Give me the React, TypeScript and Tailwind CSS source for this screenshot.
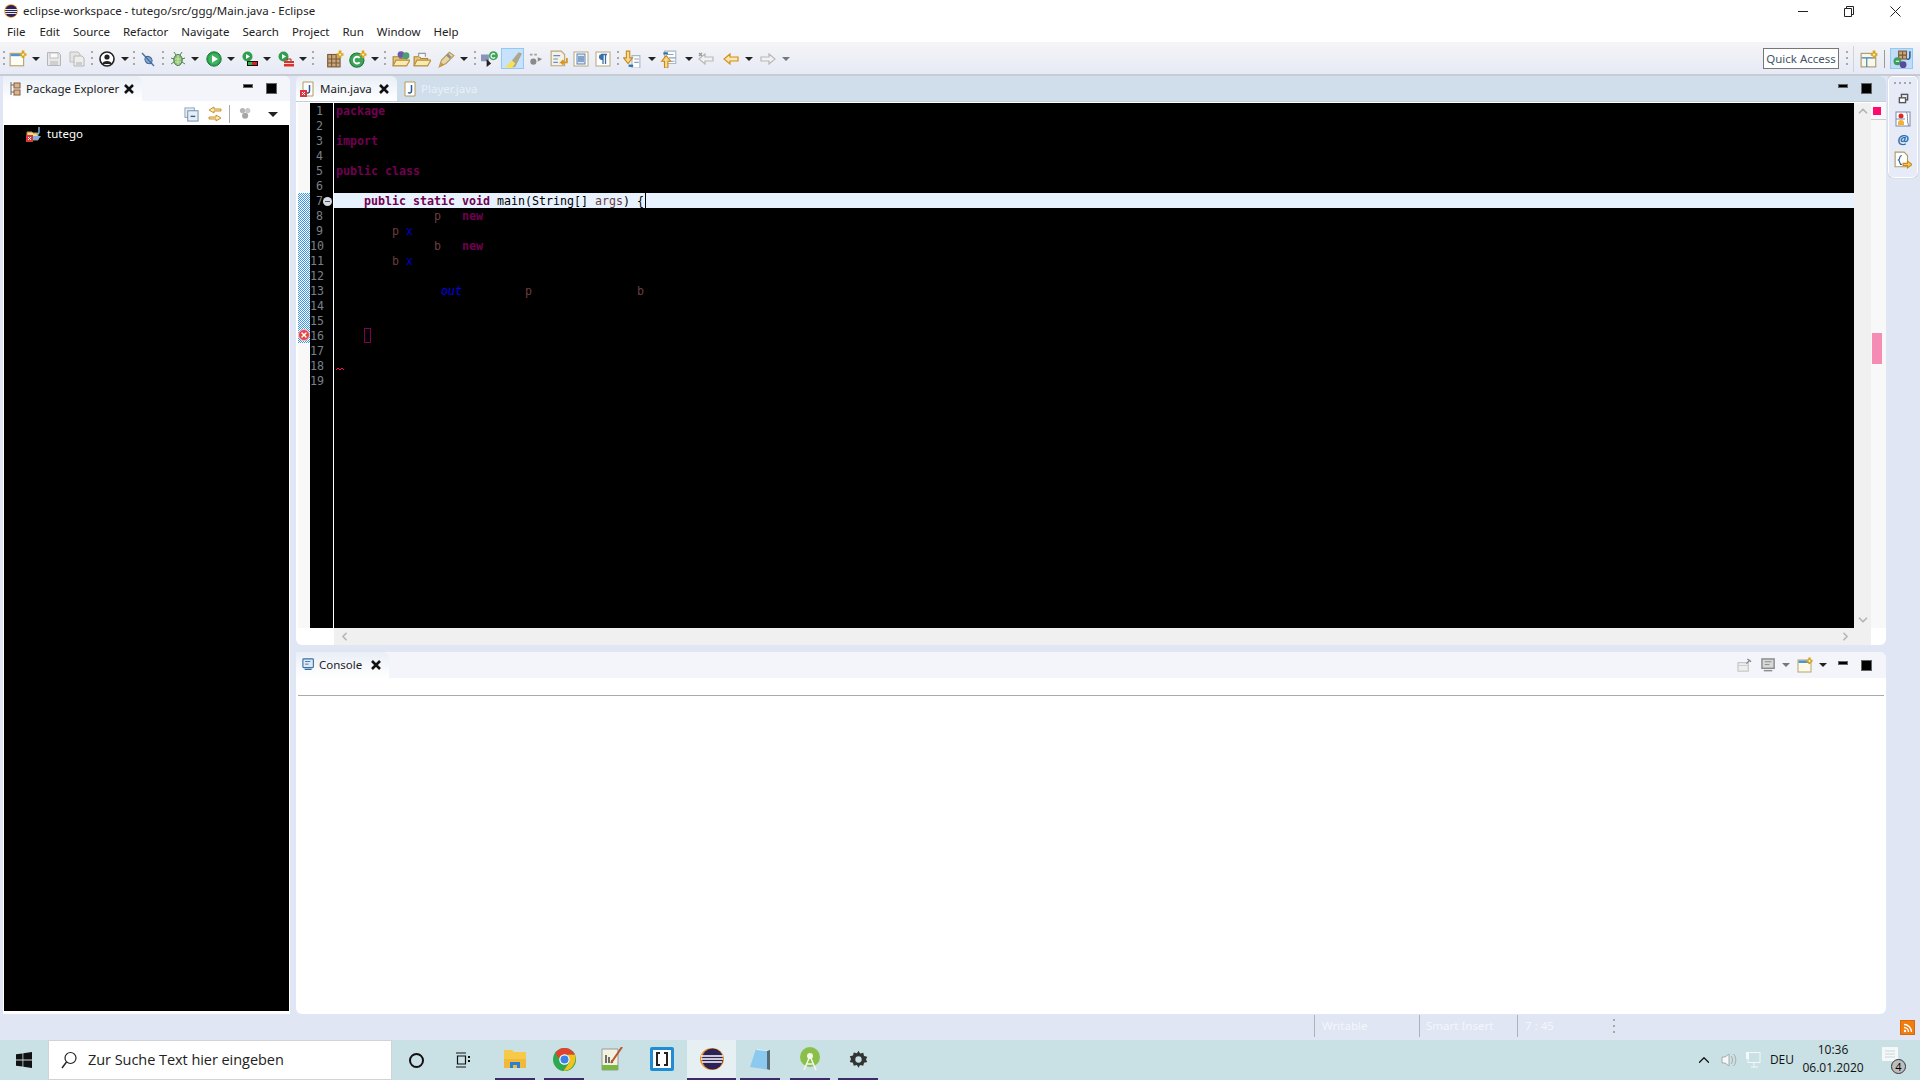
import React from "react";
import { ChevronUp, ChevronDown, ChevronLeft, ChevronRight, X } from "lucide-react";

type P = { className?: string };

const Svg = ({ children, size = 16, className = "" }: { children: React.ReactNode; size?: number; className?: string }) => (
  <svg width={size} height={size} viewBox="0 0 16 16" className={`shrink-0 ${className}`}>
    {children}
  </svg>
);

const Star = ({ x = 12, y = 4 }: { x?: number; y?: number }) => (
  <path d={`M${x} ${y - 3.5}v2.5h-0M${x - 3} ${y}h6M${x} ${y - 3}v6`} stroke="#d9a520" strokeWidth="2.4" fill="none" />
);

const NewIcon = () => (
  <Svg size={18}>
    <rect x="1" y="3" width="12" height="11" fill="#fdfdf5" stroke="#b9a36f" />
    <rect x="1.5" y="3.5" width="11" height="2" fill="#4f94cf" />
    <Star x={12.5} y={4} />
    <path d="M11.5 4h2M12.5 3v2" stroke="#fff6c8" />
  </Svg>
);
const SaveIcon = () => (
  <Svg>
    <path d="M1.5 1.5h11l2 2v11h-13z" fill="#e8e8e8" stroke="#b5b5b5" />
    <rect x="4" y="2" width="8" height="5" fill="#fafafa" stroke="#c0c0c0" />
    <rect x="4" y="10" width="8" height="4" fill="#cfcfcf" />
  </Svg>
);
const SaveAllIcon = () => (
  <Svg>
    <path d="M1 1h8l2 2v8H1z" fill="#e5e5e5" stroke="#bdbdbd" />
    <path d="M5 5h8l2 2v8H5z" fill="#eee" stroke="#b5b5b5" />
    <rect x="7" y="11" width="6" height="3" fill="#cdcdcd" />
  </Svg>
);
const PersonIcon = () => (
  <Svg>
    <circle cx="8" cy="8" r="7" fill="#fff" stroke="#222" strokeWidth="1.6" />
    <circle cx="8" cy="6" r="2.6" fill="#222" />
    <path d="M3 13c1-4 9-4 10 0z" fill="#222" />
  </Svg>
);
const SkipIcon = () => (
  <Svg>
    <ellipse cx="8.5" cy="9" rx="3.2" ry="4" transform="rotate(-40 8.5 9)" fill="#8fa6c9" stroke="#37608f" />
    <path d="M2 2l12 13" stroke="#3f6fa8" strokeWidth="1.3" />
  </Svg>
);
const BugIcon = () => (
  <Svg>
    <path d="M4 1l2 3M12 1l-2 3M1 7l3 1M15 7l-3 1M1 13l3-2M15 13l-3-2" stroke="#5a7a5a" />
    <ellipse cx="8" cy="9" rx="4.2" ry="5.5" fill="#8fc16f" stroke="#3f7a53" />
    <path d="M8 4v10M5 8h6M5 11h6" stroke="#c9e6b3" />
  </Svg>
);
const GreenDisc = ({ size = 16 }: { size?: number }) => (
  <Svg size={size}>
    <circle cx="8" cy="8" r="7.2" fill="#2f9e4f" stroke="#1c7a3a" />
    <circle cx="8" cy="8" r="5.5" fill="#3cb35c" />
    <path d="M6 4.2l6 3.8-6 3.8z" fill="#fff" />
  </Svg>
);
const CoverageIcon = () => (
  <Svg>
    <circle cx="5.5" cy="5.5" r="5" fill="#2f9e4f" />
    <path d="M4 3l4 2.5L4 8z" fill="#fff" />
    <rect x="5" y="10" width="11" height="5" fill="#111" />
    <rect x="6" y="11" width="4" height="3" fill="#2fb53f" />
    <rect x="10" y="11" width="5" height="3" fill="#d82020" />
  </Svg>
);
const ExternalIcon = () => (
  <Svg>
    <circle cx="5.5" cy="5.5" r="5" fill="#2f9e4f" />
    <path d="M4 3l4 2.5L4 8z" fill="#fff" />
    <rect x="6" y="10" width="10" height="5.5" fill="#d9342b" />
    <path d="M9 10V8h4v2" stroke="#a82018" fill="none" />
    <path d="M6 12.5h10" stroke="#fff" strokeWidth=".8" />
  </Svg>
);
const PackageIcon = () => (
  <Svg size={18}>
    <rect x="1.5" y="4" width="11" height="11" fill="#c8a77a" stroke="#7b5a3a" />
    <path d="M5 4v11M9 4v11M1.5 8h11M1.5 11.5h11" stroke="#7b5a3a" />
    <Star x={12.5} y={4} />
    <path d="M11.5 4h2M12.5 3v2" stroke="#fff6c8" />
  </Svg>
);
const ClassIcon = () => (
  <Svg size={18}>
    <circle cx="7" cy="9" r="6.3" fill="#3fa35a" stroke="#1f7a3c" />
    <path d="M9.5 7a3 3 0 1 0 0 4" stroke="#fff" strokeWidth="1.6" fill="none" />
    <Star x={12.5} y={4} />
    <path d="M11.5 4h2M12.5 3v2" stroke="#fff6c8" />
  </Svg>
);
const FolderIcon = ({ extra = false }: { extra?: boolean }) => (
  <Svg size={18}>
    <path d="M1 6h5l1 1.5h6V14H1z" fill="#e8c777" stroke="#a8853c" />
    <path d="M1 14l2.5-5H16l-3 5z" fill="#fbeab0" stroke="#b3913f" />
    {extra && <circle cx="8" cy="4" r="3" fill="#6a5aa8" />}
    {extra && <circle cx="12.5" cy="5" r="3" fill="#4f9e6f" />}
    {!extra && <path d="M5 6V3h6v3" fill="#f7f7f7" stroke="#999" />}
  </Svg>
);
const PenIcon = () => (
  <Svg size={18}>
    <path d="M2 15l2-6 7-7 4 3-7 7z" fill="#e9d6a0" stroke="#b09a66" />
    <path d="M9 4l3 3" stroke="#8e8e8e" strokeWidth="2.5" />
    <path d="M2 15l2-4 2 2z" fill="#c9972f" />
  </Svg>
);
const HierIcon = () => (
  <Svg size={18}>
    <rect x="0" y="4" width="7" height="6" fill="#8a93b8" />
    <path d="M5 8v7l4-3z" fill="#222" />
    <circle cx="11" cy="5" r="4" fill="#3fa35a" />
    <path d="M12.5 4a2 2 0 1 0 0 2.500" stroke="#fff" fill="none" />
  </Svg>
);
const MarkIcon = () => (
  <Svg size={18}>
    <path d="M2 16l2-3 9-11 3 1-6 12z" fill="#ada78f" />
    <path d="M1 16h6l3-4-3-3z" fill="#f5e25a" />
  </Svg>
);
const ToggleIcon = () => (
  <Svg size={14}>
    <circle cx="5" cy="11" r="3.5" fill="#8a8a8a" />
    <path d="M1 3h3M6 3h3" stroke="#a0a0a0" strokeWidth="2" />
    <path d="M10 6l5 2-5 3z" fill="#8a8a8a" />
  </Svg>
);
const WrapIcon = () => (
  <Svg size={18}>
    <path d="M1 1h9l3 3v10H1z" fill="#f4f2e6" stroke="#b8a67a" />
    <path d="M3 5h6M3 8h4M3 11h4" stroke="#6a8cc0" />
    <path d="M15 7v4h-5l2-2m-2 2l2 2" stroke="#d6951f" strokeWidth="1.6" fill="none" />
  </Svg>
);
const BlockIcon = () => (
  <Svg size={16}>
    <rect x="1" y="1" width="14" height="14" fill="#fff" stroke="#b8a67a" />
    <rect x="4" y="3" width="8" height="10" fill="#dfe8f5" stroke="#5b82b6" />
    <path d="M5 6h6M5 8h6M5 10h6" stroke="#2f5f9e" />
  </Svg>
);
const ParaIcon = () => (
  <Svg size={16}>
    <rect x="1" y="1" width="14" height="14" fill="#fff" stroke="#b8a67a" />
    <path d="M6 3.500h6M8 3.500V13M10.500 3.500V13M8 8.500C3.500 8.500 3.500 3.500 8 3.500" stroke="#3a70a8" strokeWidth="1.300" fill="#3a70a8" />
  </Svg>
);
const DownArrowIcon = () => (
  <Svg size={18}>
    <path d="M8 5h7v11H8zM15 5v11" fill="#fff" stroke="#a8b8c8" />
    <path d="M10 8h4M10 11h4" stroke="#8aa0c0" />
    <rect x="5" y="13" width="4" height="2" fill="#2f6fb0" />
    <path d="M3 1h3v6h2.500L4.500 12 .5 7H3z" fill="#f7d98f" stroke="#c8891c" />
  </Svg>
);
const UpArrowIcon = () => (
  <Svg size={18}>
    <path d="M4 1h10v11H4z" fill="#fff" stroke="#a8b8c8" />
    <path d="M6 4h6M8 7h6M8 10h5" stroke="#8aa0c0" />
    <rect x="3" y="2" width="4" height="2" fill="#2f6fb0" />
    <path d="M4 16h3v-6h2.500L5.500 5 1.500 10H4z" fill="#f7d98f" stroke="#c8891c" />
  </Svg>
);
const BackIcon = ({ gray = false, edit = false }: { gray?: boolean; edit?: boolean }) => (
  <Svg>
    <path d="M1 8l6-5v3h8v4H7v3z" fill={gray ? "#f2f2f2" : "#fbe6ac"} stroke={gray ? "#b8b8b8" : "#d09020"} strokeWidth="1.200" />
    {edit && <path d="M1 2l3 3M4 2L1 5" stroke="#999" strokeWidth="1.300" />}
  </Svg>
);
const ForwardIcon = () => (
  <Svg>
    <path d="M15 8l-6-5v3H1v4h8v3z" fill="#f2f2f2" stroke="#b8b8b8" strokeWidth="1.200" />
  </Svg>
);

const Drop = ({ className = "", gray = false }: P & { gray?: boolean }) => (
  <span className={`block w-0 h-0 border-x-[4px] border-x-transparent border-t-[4px] shrink-0 ${gray ? "border-t-[#777]" : "border-t-[#222]"} ${className}`} />
);
const Grip = ({ className = "" }: P) => (
  <span className={`block w-[2px] h-[16px] shrink-0 bg-[repeating-linear-gradient(to_bottom,#a8a8a8_0_2px,transparent_2px_6px)] ${className}`} />
);

const XMark = () => (
  <svg width="12" height="12" viewBox="0 0 12 12" className="shrink-0">
    <path d="M2 2l8 8M10 2l-8 8" stroke="#111" strokeWidth="2.600" />
  </svg>
);
const MinBtn = ({ className = "" }: P) => <span className={`block w-[10px] h-[4px] bg-black border border-[#666] shrink-0 ${className}`} />;
const MaxBtn = ({ className = "" }: P) => <span className={`block w-[11px] h-[11px] bg-black border border-[#666] shrink-0 ${className}`} />;

const EclipseLogo = ({ size = 14 }: { size?: number }) => (
  <svg width={size} height={size} viewBox="0 0 14 14" className="shrink-0">
    <circle cx="7" cy="7" r="6.800" fill="#e8902a" />
    <circle cx="7.200" cy="7" r="6" fill="#2c2255" />
    <path d="M1 5.500h12M.8 7.500h12.400M1.500 9.500h11" stroke="#fff" strokeWidth=".9" />
  </svg>
);

const JavaFile = ({ error = false }: { error?: boolean }) => (
  <Svg size={16}>
    <path d="M3 1h10v14H3z" fill="#fff" stroke="#b59a5c" />
    <path d="M9.500 4v6c0 2-2 2.500-3.500 1.500" stroke="#2a5a9e" strokeWidth="1.500" fill="none" />
    {error && <rect x="0" y="9" width="7" height="7" fill="#d8363c" />}
    {error && <path d="M2 11l3 3M5 11l-3 3" stroke="#fff" />}
  </Svg>
);

const codeCls = "h-[15px] leading-[17px] whitespace-pre pl-[2px]";
const kw = "text-[#720050] font-bold";

const CodeLines = () => (
  <>
    <div className={codeCls}><span className={kw}>package</span></div>
    <div className={codeCls} />
    <div className={codeCls}><span className={kw}>import</span></div>
    <div className={codeCls} />
    <div className={codeCls}><span className={kw}>public class</span></div>
    <div className={codeCls} />
    <div className={`${codeCls} bg-[#e8f2fe] text-black`}>
      {"    "}<span className={kw}>public static void</span> main(String[] <span className="text-[#6a3e3e]">args</span>) {"{"}
      <span className="inline-block w-[1px] h-[15px] bg-black align-top ml-[1px]" />
    </div>
    <div className={codeCls}>{"              "}<span className="text-[#6a3e3e]">p</span>{"   "}<span className={kw}>new</span></div>
    <div className={codeCls}>{"        "}<span className="text-[#6a3e3e]">p</span>{" "}<span className="text-[#0000d0]">x</span></div>
    <div className={codeCls}>{"              "}<span className="text-[#6a3e3e]">b</span>{"   "}<span className={kw}>new</span></div>
    <div className={codeCls}>{"        "}<span className="text-[#6a3e3e]">b</span>{" "}<span className="text-[#0000d0]">x</span></div>
    <div className={codeCls} />
    <div className={codeCls}>
      {"               "}<span className="text-[#0000e6] italic">out</span>{"         "}<span className="text-[#6a3e3e]">p</span>{"               "}<span className="text-[#6a3e3e]">b</span>
    </div>
    <div className={codeCls} />
    <div className={codeCls} />
    <div className={codeCls}>{"    "}<span className="inline-block w-[7px] h-[15px] border border-[#7f0055] align-top" /></div>
    <div className={codeCls} />
    <div className={codeCls}>
      <svg width="8" height="15" viewBox="0 0 8 15" className="inline-block align-top">
        <path d="M0 12l2-2 2 2 2-2 2 2" stroke="#ff0a6c" fill="none" />
      </svg>
    </div>
    <div className={codeCls} />
  </>
);

const numbers = Array.from({ length: 19 }, (_, i) => i + 1);

const Toolbar = () => (
  <div className="h-[34px] flex items-center shrink-0 pt-[1px] bg-gradient-to-b from-[#f5f5f6] to-[#e6eaf6] border-b-2 border-[#c8cbd2]">
    <Grip className="ml-[3px]" />
    <span className="ml-[4px]"><NewIcon /></span>
    <Drop className="ml-[5px]" />
    <span className="ml-[6px]"><SaveIcon /></span>
    <span className="ml-[7px]"><SaveAllIcon /></span>
    <Grip className="ml-[6px]" />
    <span className="ml-[6px]"><PersonIcon /></span>
    <Drop className="ml-[6px]" />
    <Grip className="ml-[4px]" />
    <span className="ml-[5px]"><SkipIcon /></span>
    <Grip className="ml-[6px]" />
    <span className="ml-[6px]"><BugIcon /></span>
    <Drop className="ml-[5px]" />
    <span className="ml-[7px]"><GreenDisc /></span>
    <Drop className="ml-[5px]" />
    <span className="ml-[7px]"><CoverageIcon /></span>
    <Drop className="ml-[5px]" />
    <span className="ml-[7px]"><ExternalIcon /></span>
    <Drop className="ml-[5px]" />
    <Grip className="ml-[5px]" />
    <span className="ml-[12px]"><PackageIcon /></span>
    <span className="ml-[5px]"><ClassIcon /></span>
    <Drop className="ml-[4px]" />
    <Grip className="ml-[5px]" />
    <span className="ml-[6px]"><FolderIcon extra /></span>
    <span className="ml-[3px]"><FolderIcon /></span>
    <span className="ml-[6px]"><PenIcon /></span>
    <Drop className="ml-[5px]" />
    <Grip className="ml-[6px]" />
    <span className="ml-[5px]"><HierIcon /></span>
    <span className="ml-[2px] w-[23px] h-[21px] flex items-center justify-center bg-[#c9e2fb] border border-[#90c8f6]"><MarkIcon /></span>
    <span className="ml-[5px]"><ToggleIcon /></span>
    <span className="ml-[7px]"><WrapIcon /></span>
    <span className="ml-[5px]"><BlockIcon /></span>
    <span className="ml-[6px]"><ParaIcon /></span>
    <Grip className="ml-[6px]" />
    <span className="ml-[4px]"><DownArrowIcon /></span>
    <Drop className="ml-[7px]" />
    <span className="ml-[4px]"><UpArrowIcon /></span>
    <Drop className="ml-[7px]" />
    <span className="ml-[5px]"><BackIcon gray edit /></span>
    <span className="ml-[9px]"><BackIcon /></span>
    <Drop className="ml-[6px]" />
    <span className="ml-[7px]"><ForwardIcon /></span>
    <Drop gray className="ml-[6px]" />
    <div className="ml-auto flex items-center">
      <div className="w-[76px] h-[21px] border border-[#777] bg-white text-[11.5px] leading-[19px] text-center text-[#445566]">Quick Access</div>
      <Grip className="ml-[7px]" />
      <span className="ml-[5px] w-[1px] h-[26px] bg-[#d0d3da]" />
      <span className="ml-[6px]">
        <Svg size={18}>
          <rect x="1" y="3" width="13" height="12" fill="#f9f7ea" stroke="#a99a70" />
          <path d="M1.500 7h12M6 7v8" stroke="#3f7fb0" />
          <Star x={12.500} y={4} />
          <path d="M11.500 4h2M12.500 3v2" stroke="#fff6c8" />
        </Svg>
      </span>
      <span className="ml-[6px] w-[1px] h-[18px] bg-[#999]" />
      <span className="ml-[5px] mr-[7px] w-[23px] h-[21px] flex items-center justify-center bg-[#c0dcf6] border border-[#90c8f6]">
        <Svg size={18}>
          <rect x="5" y="1" width="7" height="7" fill="#c8a77a" stroke="#7b5a3a" />
          <path d="M8.500 1v7M5 4.500h7" stroke="#7b5a3a" />
          <path d="M15 1v5c0 2-1 2.500-2.500 2" stroke="#2a5a9e" strokeWidth="1.400" fill="none" />
          <circle cx="4" cy="10" r="3.500" fill="#3b9e5a" />
          <path d="M2.500 10h3" stroke="#fff" />
          <circle cx="9" cy="13" r="3" fill="#5a4a9e" />
        </Svg>
      </span>
    </div>
  </div>
);

const PackageExplorer = () => (
  <section className="w-[287px] flex flex-col bg-white rounded-t-md">
    <div className="h-[25px] flex items-center bg-[#f3f5fb] rounded-t-md shrink-0">
      <div className="w-[139px] h-full flex items-center bg-gradient-to-b from-[#e9eff7] to-white rounded-tr-md pl-[6px] whitespace-nowrap">
        <svg width="12" height="14" viewBox="0 0 12 14" className="shrink-0">
          <path d="M2 0v13M2 3h3M2 10h3" stroke="#6a6a6a" />
          <rect x="5" y="1" width="6" height="5" fill="#d8b58a" stroke="#8a5a3a" />
          <rect x="5" y="8" width="6" height="5" fill="#d8b58a" stroke="#8a5a3a" />
        </svg>
        <span className="ml-[5px] text-[11.5px] leading-[27px] text-[#222]">Package Explorer</span>
        <span className="ml-[4px]"><XMark /></span>
      </div>
      <MinBtn className="ml-[101px] -mt-[6px]" />
      <MaxBtn className="ml-[13px] -mt-[1px]" />
    </div>
    <div className="h-[24px] flex items-center shrink-0 pl-[181px] pt-[2px]">
      <Svg size={15}>
        <rect x="1" y="1" width="10" height="10" fill="#e8eef6" stroke="#8aa0b8" />
        <rect x="4" y="4" width="11" height="11" fill="#e8eef6" stroke="#6a8aa8" />
        <path d="M7 10h5" stroke="#2f5f9e" strokeWidth="1.500" />
      </Svg>
      <Svg size={16} className="ml-[8px]">
        <path d="M7 1L2 4l5 3V5h7V3H7zM9 9l5 3-5 3v-2H2v-2h7z" fill="#f9e9b8" stroke="#c8922a" />
      </Svg>
      <span className="ml-[6px] w-[1px] h-[18px] bg-[#aaa]" />
      <Svg size={14} className="ml-[9px]">
        <circle cx="4" cy="4" r="3" fill="#b5b5b5" />
        <circle cx="10" cy="4" r="3" fill="#c8c8c8" />
        <circle cx="7" cy="10" r="3.500" fill="#a5a5a5" />
      </Svg>
      <Drop className="ml-[15px] border-x-[5px] border-t-[5px]" />
    </div>
    <div className="mx-[1px] h-[886px] bg-black text-white text-[11.5px] pl-[22px] pt-[1px] flex items-start">
      <div className="flex items-center h-[15px]">
        <Svg size={16}>
          <path d="M1 6h5l1 1h5v7H1z" fill="#f5d58a" stroke="#b3913f" />
          <path d="M2 14l2-4h11l-3 4z" fill="#7fb0e0" />
          <path d="M13 1v5c0 2-1.500 2-3 1.500" stroke="#7fb0e0" strokeWidth="1.500" fill="none" />
          <rect x="0" y="9" width="7" height="7" fill="#d8363c" />
          <path d="M2 11l3 3M5 11l-3 3" stroke="#fff" />
        </Svg>
        <span className="ml-[5px]">tutego</span>
      </div>
    </div>
  </section>
);

const EditorArea = () => (
  <section className="h-[569px] flex flex-col bg-white rounded-md shrink-0">
    <div className="h-[25px] flex items-stretch shrink-0 bg-[#d0deec] rounded-t-md">
      <div className="w-[101px] flex items-center bg-gradient-to-b from-[#e9eff7] to-white rounded-t-md pl-[4px]">
        <JavaFile error />
        <span className="ml-[4px] text-[11.5px] leading-[27px] text-[#222]">Main.java</span>
        <span className="ml-[6px]"><XMark /></span>
      </div>
      <div className="flex items-center pl-[5px]">
        <JavaFile />
        <span className="ml-[3px] text-[11.5px] leading-[27px] text-[#e9f0f7]">Player.java</span>
      </div>
      <div className="ml-auto flex items-center pr-[14px]">
        <MinBtn className="-mt-[6px]" />
        <MaxBtn className="ml-[13px] -mt-[1px]" />
      </div>
    </div>
    <div className="h-[2px] shrink-0 bg-white border-t border-[#c5cdd8]" />
    <div className="h-[525px] flex shrink-0 font-['DejaVu_Sans_Mono',monospace] text-[11.63px]">
      <div className="w-[14px] pl-[2px] shrink-0">
        <div className="h-full bg-[#f8f8f8] relative">
          <div className="mt-[0px] pt-[90px] h-[240px]">
            <div className="h-[150px] bg-[repeating-conic-gradient(#3e96ec_0_25%,#ffffff_0_50%)] bg-[length:2px_2px]" />
          </div>
          <span className="absolute left-[0px] top-[226px] w-[12px] h-[12px] rounded-full bg-[#e04848] border border-[#f4c0c0] flex items-center justify-center">
            <X size={8} strokeWidth={4} color="#fff" />
          </span>
        </div>
      </div>
      <div className="w-[23px] bg-black text-[#788089] text-right pr-[10px] shrink-0 relative">
        {numbers.map((n) => (
          <div key={n} className="h-[15px] leading-[17px]">{n}</div>
        ))}
        <span className="absolute left-[13px] top-[94px] w-[9px] h-[9px] rounded-full bg-[#d5dde2] flex items-center justify-center">
          <span className="w-[5px] h-[1px] bg-[#556]" />
        </span>
      </div>
      <div className="w-[1px] bg-white shrink-0" />
      <div className="flex-1 bg-black text-black overflow-hidden">
        <CodeLines />
      </div>
      <div className="w-[17px] bg-[#f0f0f0] shrink-0 flex flex-col items-center justify-between text-[#b5b5b5] py-[1px]">
        <ChevronUp size={14} strokeWidth={3} />
        <ChevronDown size={14} strokeWidth={3} />
      </div>
      <div className="w-[15px] bg-[#f8f8f8] shrink-0 relative">
        <span className="absolute left-[2px] top-[4px] w-[8px] h-[8px] bg-[#ff0a6c]" />
        <span className="absolute left-0 top-[16px] w-full h-[1px] bg-[#ccc]" />
        <span className="absolute left-[1px] top-[230px] w-[10px] h-[31px] bg-[#f48cb4]" />
      </div>
    </div>
    <div className="h-[17px] flex shrink-0">
      <div className="w-[38px] shrink-0" />
      <div className="flex-1 bg-[#f0f0f0] flex items-center justify-between px-[4px] text-[#b5b5b5]">
        <ChevronLeft size={13} strokeWidth={3} />
        <ChevronRight size={13} strokeWidth={3} className="mr-[15px]" />
      </div>
      <div className="w-[15px] shrink-0" />
    </div>
  </section>
);

const ConsoleArea = () => (
  <section className="flex-1 flex flex-col bg-white rounded-t-md rounded-b-md">
    <div className="h-[26px] flex items-center bg-[#f3f5fb] rounded-t-md shrink-0">
      <div className="w-[93px] h-full flex items-center bg-gradient-to-b from-[#e9eff7] to-white rounded-tr-md pl-[6px]">
        <Svg size={14}>
          <rect x="1" y="1" width="12" height="10" rx="1" fill="#dfe8f5" stroke="#3a70a8" strokeWidth="1.300" />
          <path d="M3.500 4h6M3.500 7h4" stroke="#3a70a8" />
          <path d="M3 13h8" stroke="#3a70a8" strokeWidth="1.500" />
        </Svg>
        <span className="ml-[3px] text-[11.5px] leading-[28px] text-[#222]">Console</span>
        <span className="ml-[8px]"><XMark /></span>
      </div>
      <div className="ml-auto flex items-center pr-[14px]">
        <Svg size={15}>
          <rect x="1" y="5" width="11" height="9" fill="#eee" stroke="#bbb" />
          <path d="M1 8h11" stroke="#ccc" />
          <path d="M10 6l4-4M11 1l4 3" stroke="#888" strokeWidth="1.500" />
        </Svg>
        <Svg size={15} className="ml-[9px]">
          <rect x="1" y="1" width="13" height="10" fill="#d8d8d8" stroke="#8a8a8a" strokeWidth="1.500" />
          <path d="M4 4h7M4 7h5" stroke="#8a8a8a" />
          <path d="M3 13.500h9" stroke="#8a8a8a" strokeWidth="1.500" />
        </Svg>
        <Drop gray className="ml-[6px]" />
        <Svg size={16} className="ml-[7px]">
          <rect x="1" y="3" width="13" height="12" fill="#fdfbe8" stroke="#b9a36f" />
          <rect x="1.500" y="3.500" width="12" height="2.500" fill="#4f94cf" />
          <Star x={12.500} y={4} />
          <path d="M11.500 4h2M12.500 3v2" stroke="#fff6c8" />
        </Svg>
        <Drop className="ml-[6px]" />
        <MinBtn className="ml-[11px] -mt-[5px]" />
        <MaxBtn className="ml-[13px]" />
      </div>
    </div>
    <div className="mx-[2px] mt-[17px] h-[1px] bg-[#aaaaaa]" />
  </section>
);

const TrimStack = () => (
  <aside className="w-[30px] h-[102px] flex flex-col items-center bg-[#e6ebf7] border border-white rounded-b-md rounded-t-sm shadow-[0_0_1px_#999]">
    <span className="mt-[5px] w-[18px] h-[2px] bg-[repeating-linear-gradient(to_right,#a8a8a8_0_2px,transparent_2px_5px)]" />
    <Svg size={11} className="mt-[9px]">
      <rect x="5" y="2" width="9" height="8" fill="none" stroke="#555" strokeWidth="2" />
      <rect x="2" y="7" width="9" height="7" fill="#fff" stroke="#555" strokeWidth="2" />
    </Svg>
    <Svg size={16} className="mt-[7px]">
      <rect x="1" y="1" width="14" height="14" fill="#fff" stroke="#7b8aa8" />
      <circle cx="6" cy="5" r="2.500" fill="#e02828" />
      <path d="M3 12a3 3 0 0 1 6 0v2H3z" fill="#f4b030" />
      <path d="M1 8h9M11 1c3 3 0 9 3 14" stroke="#7b8aa8" fill="none" />
    </Svg>
    <span className="mt-[5px] text-[13px] leading-[15px] italic font-bold text-[#2a70b0]">@</span>
    <Svg size={18} className="mt-[4px]">
      <path d="M1 1h8l3 3v10H1z" fill="#fff" stroke="#b09a60" />
      <path d="M7 4C4 4 6 7 4 8c2 1 0 4 3 4" stroke="#2a5a9e" fill="none" />
      <path d="M8 11h4V9l4 3-4 3v-2H8z" fill="#f5c860" stroke="#c8891c" />
    </Svg>
  </aside>
);

const StatusBar = () => (
  <div className="h-[26px] shrink-0 flex items-start text-[11.5px] text-[#f4f6fb] pt-[1px]">
    <div className="ml-[1314px] w-[105px] h-[22px] border-l border-[#aeb2ba] pl-[7px] leading-[22px]">Writable</div>
    <div className="w-[98px] h-[22px] border-l border-[#aeb2ba] pl-[6px] leading-[22px]">Smart Insert</div>
    <div className="w-[96px] h-[22px] border-l border-[#aeb2ba] pl-[7px] leading-[22px]">7 : 45</div>
    <Grip className="mt-[4px]" />
    <span className="ml-[285px] mt-[5px] w-[15px] h-[15px] bg-[#f07d12] border border-[#d8690a] flex items-center justify-center">
      <svg width="10" height="10" viewBox="0 0 10 10">
        <circle cx="2" cy="8" r="1.200" fill="#fff" />
        <path d="M1 4.500A4.500 4.500 0 0 1 5.500 9M1 1.500A7.500 7.500 0 0 1 8.500 9" stroke="#fff" strokeWidth="1.300" fill="none" />
      </svg>
    </span>
  </div>
);

const TaskIcon = ({ children, wide = false, active = false, running = true, className = "" }: { children: React.ReactNode; wide?: boolean; active?: boolean; running?: boolean; className?: string }) => (
  <div className={`h-full flex items-center justify-center shrink-0 border-b-2 ${running ? "border-[#3d2a6d]" : "border-transparent"} ${wide ? "w-[49px]" : "w-[40px]"} ${active ? "bg-[#e6f0f2]" : ""} ${className}`}>
    {children}
  </div>
);

const Taskbar = () => (
  <div className="h-[40px] shrink-0 bg-[#c9e0e4] flex items-center font-['Open_Sans',sans-serif]">
    <svg width="16" height="16" viewBox="0 0 16 16" className="ml-[16px] shrink-0">
      <path d="M0 2.300l6.500-.9v6.200H0zM7.300 1.300L16 0v7.600H7.300zM0 8.400h6.500v6.200L0 13.700zM7.300 8.400H16V16l-8.700-1.300z" fill="#111" />
    </svg>
    <div className="ml-[16px] w-[344px] h-full bg-white border border-[#d0d4d6] flex items-center pl-[11px] text-[14.5px] text-[#222]">
      <svg width="18" height="18" viewBox="0 0 18 18" className="shrink-0">
        <circle cx="10.500" cy="7" r="5.500" fill="none" stroke="#222" strokeWidth="1.200" />
        <path d="M6.500 11L2 17" stroke="#222" strokeWidth="1.400" />
      </svg>
      <span className="ml-[10px] tracking-[-0.05px]">Zur Suche Text hier eingeben</span>
    </div>
    <span className="ml-[17px] w-[15px] h-[15px] rounded-full border-[2.500px] border-[#111] shrink-0" />
    <svg width="16" height="16" viewBox="0 0 16 16" className="ml-[31px] shrink-0">
      <path d="M1 1h10M1 15h10M2.500 4h8v8h-8z" stroke="#111" fill="none" strokeWidth="1.200" />
      <path d="M13 4h2v2h-2zM13 8h2v2h-2z" fill="#111" />
    </svg>
    <div className="ml-[24px] h-full flex items-center">
      <TaskIcon>
        <svg width="22" height="18" viewBox="0 0 22 18">
          <path d="M0 0h8l2 2h12v16H0z" fill="#f7c948" />
          <rect x="0" y="9" width="22" height="9" fill="#f0b93a" />
          <path d="M6 18v-6h10v6h-3v-3H9v3z" fill="#2a7fd0" />
        </svg>
      </TaskIcon>
      <TaskIcon className="ml-[9px]">
        <svg width="23" height="23" viewBox="0 0 24 24">
          <circle cx="12" cy="12" r="12" fill="#2fa84f" />
          <path d="M12 0c5 0 9 3 11 7H12c-3 0-5 2-6 4L2.500 5C5 2 8 0 12 0z" fill="#e2412f" />
          <path d="M23 7c2 7-3 17-12 17l6-9c1-3 0-6-2-8z" fill="#f6c21a" />
          <circle cx="12" cy="12" r="5.500" fill="#fff" />
          <circle cx="12" cy="12" r="4.200" fill="#3c80e8" />
        </svg>
      </TaskIcon>
      <TaskIcon running={false} className="ml-[8px]">
        <svg width="22" height="24" viewBox="0 0 22 24">
          <path d="M1 2h16v21H1z" fill="#f2f2de" stroke="#999" />
          <path d="M1 18h16v5H1z" fill="#7ab648" />
          <path d="M5 8v8M8 10v6M11 13v3" stroke="#444" strokeWidth="1.500" />
          <path d="M21 0L10 16" stroke="#b7562e" strokeWidth="2" />
        </svg>
      </TaskIcon>
      <TaskIcon running={false} className="ml-[10px]">
        <svg width="24" height="24" viewBox="0 0 24 24">
          <rect x="0" y="0" width="24" height="24" rx="2" fill="#1f8dd6" />
          <rect x="3" y="3" width="18" height="18" fill="#fff" />
          <path d="M10 6H7v12h3M14 6h3v12h-3" stroke="#222" strokeWidth="2" fill="none" />
        </svg>
      </TaskIcon>
      <TaskIcon wide active className="ml-[5px]">
        <svg width="24" height="22" viewBox="0 0 24 22">
          <ellipse cx="12" cy="11" rx="12" ry="11" fill="#e8902a" />
          <ellipse cx="12.500" cy="11" rx="10.500" ry="10.500" fill="#2c2255" />
          <path d="M1 8h22M1 11h22M2 14h20" stroke="#fff" strokeWidth="1.300" />
        </svg>
      </TaskIcon>
      <TaskIcon className="ml-[4px]">
        <svg width="22" height="24" viewBox="0 0 22 24">
          <path d="M7 2l14 1v20L1 20z" fill="#8cc9ee" />
          <path d="M7 2l14 1-2 1L8 3z" fill="#e8f4fa" />
          <path d="M21 3v20l-3-1V4z" fill="#5a6a72" />
        </svg>
      </TaskIcon>
      <TaskIcon className="ml-[10px]">
        <svg width="20" height="24" viewBox="0 0 20 24">
          <ellipse cx="10" cy="10" rx="10" ry="10" fill="#8abf4a" />
          <circle cx="10" cy="9" r="3" fill="#f1f6e8" />
          <path d="M10 9L4 23M10 9l6 14M6.500 17h7" stroke="#f4f7ef" strokeWidth="1.500" />
        </svg>
      </TaskIcon>
      <TaskIcon className="ml-[8px]">
        <svg width="19" height="19" viewBox="0 0 24 24">
          <path d="M12 1l2 3.500 4-1 1 4 4 1-1.500 3.500L23 15l-4 1-1 4-4-1-2 3.500L10 19l-4 1-1-4-4-1 1.500-3.500L1 8l4-1 1-4 4 1z" fill="#333" />
          <circle cx="12" cy="12" r="4" fill="#c9e0e4" />
        </svg>
      </TaskIcon>
    </div>
    <div className="ml-auto h-full flex items-center text-[12px] text-[#111]">
      <ChevronUp size={18} strokeWidth={1.600} color="#111" />
      <svg width="17" height="16" viewBox="0 0 17 16" className="ml-[8px]">
        <path d="M1 5h3l4-3v12l-4-3H1z" fill="#f4f8f9" stroke="#aaa" />
        <path d="M10 4c2 2 2 6 0 8M12.500 2c3 3 3 9 0 12" stroke="#aaa" fill="none" />
      </svg>
      <svg width="16" height="18" viewBox="0 0 16 18" className="ml-[7px]">
        <rect x="3" y="1.500" width="12" height="10" fill="none" stroke="#f4f8f9" />
        <rect x="1" y="1" width="3" height="7" fill="#f4f8f9" />
        <path d="M6 16h7M9 12v4" stroke="#f4f8f9" />
      </svg>
      <span className="ml-[9px]">DEU</span>
      <div className="ml-[10px] w-[58px] flex flex-col items-center leading-[18px] -mt-[2px]">
        <span>10:36</span>
        <span>06.01.2020</span>
      </div>
      <div className="ml-[20px] mr-[14px] w-[24px] h-[28px] relative">
        <svg width="16" height="16" viewBox="0 0 16 16">
          <rect x="0" y="1" width="16" height="14" fill="#f4f8f9" />
          <path d="M3 5h10M3 8h10M3 11h10" stroke="#c9d6da" />
        </svg>
        <span className="absolute right-0 bottom-0 w-[15px] h-[15px] rounded-full bg-[#bdbdbd] border border-[#333] text-[11px] leading-[13px] text-center text-black">4</span>
      </div>
    </div>
  </div>
);

export default function App() {
  return (
    <div className="w-[1920px] h-[1080px] flex flex-col overflow-hidden bg-[#e0e6f4] font-['Noto_Sans',sans-serif]">
      <header className="h-[22px] bg-white flex items-center shrink-0 pl-[4px] text-[11.5px] text-[#222]">
        <EclipseLogo />
        <span className="ml-[5px] leading-[24px]">eclipse-workspace - tutego/src/ggg/Main.java - Eclipse</span>
        <div className="ml-auto flex items-center">
          <svg width="10" height="11" viewBox="0 0 10 11"><path d="M0 5.500h10" stroke="#222" /></svg>
          <svg width="10" height="11" viewBox="0 0 10 11" className="ml-[36px]">
            <path d="M.5 2.500h7v8h-7zM2.500 2.500v-2h7v8h-2" fill="none" stroke="#222" />
          </svg>
          <svg width="11" height="11" viewBox="0 0 11 11" className="ml-[36px] mr-[19px]">
            <path d="M.5.5l10 10M10.500.5l-10 10" stroke="#222" />
          </svg>
        </div>
      </header>
      <nav className="h-[20px] bg-white flex items-center shrink-0 text-[11.5px] leading-[22px] text-[#222]">
        <span className="ml-[7px]">File</span>
        <span className="ml-[14px]">Edit</span>
        <span className="ml-[13px]">Source</span>
        <span className="ml-[13px]">Refactor</span>
        <span className="ml-[13px]">Navigate</span>
        <span className="ml-[13px]">Search</span>
        <span className="ml-[13px]">Project</span>
        <span className="ml-[13px]">Run</span>
        <span className="ml-[13px]">Window</span>
        <span className="ml-[13px]">Help</span>
      </nav>
      <Toolbar />
      <main className="flex-1 flex pl-[3px] min-h-0">
        <PackageExplorer />
        <div className="ml-[6px] w-[1590px] flex flex-col gap-[7px]">
          <EditorArea />
          <ConsoleArea />
        </div>
        <div className="ml-[2px]">
          <TrimStack />
        </div>
      </main>
      <StatusBar />
      <Taskbar />
    </div>
  );
}
